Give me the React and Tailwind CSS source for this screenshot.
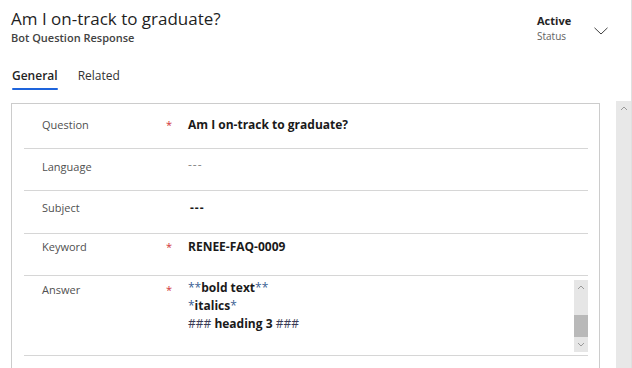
import React from "react";

function Chevron({ className, up }) {
  return (
    <svg className={className} viewBox="0 0 8 5" fill="none">
      <path d={up ? "M1 4 L4 1 L7 4" : "M1 1 L4 4 L7 1"} stroke="#9a9a9a" strokeWidth="1" />
    </svg>
  );
}

function Row({ className, label, required, children }) {
  return (
    <div className={`flex items-start border-b border-[#d6d6d6] ${className}`}>
      <div className="w-[142px] pl-[18px] text-[11px] leading-[20px] text-[#505050]">{label}</div>
      <div className="w-[22px] text-[11px] leading-[20px] text-[#d13438]">{required ? "*" : ""}</div>
      <div className="flex-1 min-w-0">{children}</div>
    </div>
  );
}

export default function App() {
  return (
    <div className="w-[632px] h-[368px] overflow-hidden bg-white border-r border-[#e0e0e0] font-['Open_Sans',sans-serif] text-[#242424] flex flex-col">
      {/* Header */}
      <div className="flex justify-between pl-[11px] pt-[8px]">
        <div>
          <h1 className="text-[17px] leading-[22px] font-normal text-[#1f1f1f]">Am I on-track to graduate?</h1>
          <p className="mt-[1px] text-[11px] leading-[14px] font-semibold text-[#424242]">Bot Question Response</p>
        </div>
        <div className="flex pr-[23px] pt-[6px]">
          <div className="w-[57px]">
            <div className="text-[11px] leading-[14px] font-bold text-[#242424]">Active</div>
            <div className="mt-[2px] text-[10px] leading-[12px] text-[#616161]">Status</div>
          </div>
          <svg className="w-[14px] h-[8px] mt-[13px]" viewBox="0 0 14 8" fill="none">
            <path d="M0.5 0.8 L7 7 L13.5 0.8" stroke="#404040" strokeWidth="1" />
          </svg>
        </div>
      </div>

      {/* Tabs */}
      <div className="flex gap-[20px] pl-[12px] mt-[23px]">
        <div className="flex flex-col">
          <span className="text-[12px] leading-[16px] font-semibold text-[#242424]">General</span>
          <div className="mt-[4px] h-[2px] rounded-full bg-[#1e64dc]" />
        </div>
        <div className="flex flex-col">
          <span className="text-[12px] leading-[16px] text-[#333333]">Related</span>
          <div className="mt-[4px] h-[2px]" />
        </div>
      </div>

      {/* Body */}
      <div className="flex-1 min-h-0 mt-[11px] flex justify-between">
        <div className="pl-[11px] pt-[2px]">
          <div className="w-[589px] border border-[#cccccc] pl-[12px] pr-[11px] pb-[40px]">
            <Row className="h-[45px] pt-[11px]" label="Question" required>
              <div className="text-[12px] leading-[20px] font-bold text-[#1a1a1a]">Am I on-track to graduate?</div>
            </Row>
            <Row className="h-[42px] pt-[8px]" label="Language">
              <div className="text-[12px] leading-[20px] text-[#8a8a8a] tracking-[1px] -mt-[2px]">---</div>
            </Row>
            <Row className="h-[43px] pt-[7px]" label="Subject">
              <div className="ml-[2px] text-[12px] leading-[20px] font-bold text-[#1a1a1a] tracking-[1px]">---</div>
            </Row>
            <Row className="h-[42px] pt-[3px]" label="Keyword" required>
              <div className="text-[12px] leading-[20px] font-bold text-[#1a1a1a]">RENEE-FAQ-0009</div>
            </Row>
            <Row className="h-[80px] pt-[4px]" label="Answer" required>
              <div className="flex h-[72px]">
                <div className="flex-1 -mt-[1px] text-[12px] leading-[18px] font-bold text-[#1a1a1a]">
                  <div>
                    <span className="font-normal text-[#3a5f93]">**</span>bold text<span className="font-normal text-[#3a5f93]">**</span>
                  </div>
                  <div>
                    <span className="font-normal text-[#3a5f93]">*</span>italics<span className="font-normal text-[#3a5f93]">*</span>
                  </div>
                  <div>
                    <span className="font-normal text-[#3b3b55]">###</span> heading 3 <span className="font-normal text-[#3b3b55]">###</span>
                  </div>
                </div>
                <div className="w-[14px] h-[72px] bg-[#e6e6e6] flex flex-col">
                  <div className="h-[15px] flex items-center justify-center">
                    <Chevron up className="w-[8px] h-[5px]" />
                  </div>
                  <div className="flex-1" />
                  <div className="h-[22px] bg-[#b9b9b9]" />
                  <div className="h-[15px] flex items-center justify-center">
                    <Chevron className="w-[8px] h-[5px]" />
                  </div>
                </div>
              </div>
            </Row>
          </div>
        </div>

        {/* Page scrollbar */}
        <div className="w-[15px] bg-[#e8e8e8] flex justify-center pt-[5px]">
          <Chevron up className="w-[8px] h-[5px]" />
        </div>
      </div>
    </div>
  );
}
